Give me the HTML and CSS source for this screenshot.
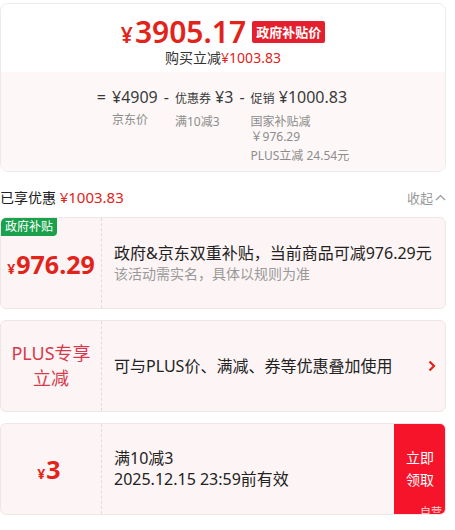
FILE: index.html
```html
<!DOCTYPE html>
<html lang="zh-CN">
<head>
    <meta charset="UTF-8">
    <meta name="viewport" content="width=device-width, initial-scale=1.0">
    <title>优惠明细</title>
    <link rel="stylesheet" href="styles.css">
</head>
<body>
    <div class="page">
        <section class="summary">
            <div class="summary-head">
                <div class="final-price"><span class="yen">¥</span>3905.17<span class="tag">政府补贴价</span></div>
                <div class="cut">购买立减<span class="red">¥1003.83</span></div>
            </div>
            <div class="formula">
                <span class="op">=</span>
                <div class="term">
                    <div class="amount">¥4909</div>
                    <div class="note">京东价</div>
                </div>
                <span class="op">-</span>
                <div class="term">
                    <div class="amount"><small>优惠券</small> ¥3</div>
                    <div class="note">满10减3</div>
                </div>
                <span class="op">-</span>
                <div class="term">
                    <div class="amount"><small>促销</small> ¥1000.83</div>
                    <div class="note">国家补贴减<br>￥976.29</div>
                    <div class="note plus">PLUS立减 24.54元</div>
                </div>
            </div>
        </section>

        <div class="saved">
            <div>已享优惠 <span class="red">¥1003.83</span></div>
            <div class="fold">收起 <svg width="11" height="7" viewBox="0 0 11 7"><path d="M1 6l4.5-4.5L10 6" fill="none" stroke="#999" stroke-width="1.2"/></svg></div>
        </div>

        <div class="card">
            <span class="badge">政府补贴</span>
            <div class="card-left">
                <div class="big-price"><span class="yen">¥</span>976.29</div>
            </div>
            <div class="card-body">
                <div class="title">政府&amp;京东双重补贴，当前商品可减976.29元</div>
                <div class="desc">该活动需实名，具体以规则为准</div>
            </div>
        </div>

        <div class="card">
            <div class="card-left">
                <div class="plus-label">PLUS专享<br>立减</div>
            </div>
            <div class="card-body">
                <div class="title">可与PLUS价、满减、券等优惠叠加使用</div>
            </div>
            <svg class="arrow" width="8" height="12" viewBox="0 0 8 12"><path d="M1.5 1.5L6 6l-4.5 4.5" fill="none" stroke="#e2231a" stroke-width="2.2"/></svg>
        </div>

        <div class="card">
            <div class="card-left">
                <div class="big-price small"><span class="yen">¥</span>3</div>
            </div>
            <div class="card-body">
                <div class="title">满10减3</div>
                <div class="title">2025.12.15 23:59前有效</div>
            </div>
            <div class="get-btn">
                <span>立即<br>领取</span>
                <span class="self">自营</span>
            </div>
        </div>
    </div>
</body>
</html>
```

FILE: styles.css
```css
body {
    margin: 0;
    padding: 0;
    background-color: #fff;
    color: #333;
    font-family: "Noto Sans", "Noto Sans CJK SC", sans-serif;
}
.page {
    width: 446px;
    padding-top: 3px;
}
.red {
    color: #e2231a;
}
.summary {
    border: 1px solid #ebebeb;
    border-radius: 8px;
    overflow: hidden;
}
.summary-head {
    padding: 10px 0 4px;
    text-align: center;
    background-color: #fff;
}
.final-price {
    display: flex;
    justify-content: center;
    align-items: center;
    height: 36px;
    font-size: 30px;
    line-height: 36px;
    font-weight: 600;
    color: #e2231a;
}
.final-price .yen {
    font-size: 21px;
    line-height: 1;
    margin: 6px 2px 0 0;
}
.tag {
    margin-left: 6px;
    padding: 0 4px;
    background-color: #e4202e;
    color: #fff;
    font-size: 13px;
    line-height: 22px;
    font-weight: 700;
    border-radius: 2px;
}
.cut {
    margin-top: -2px;
    font-size: 14px;
    line-height: 20px;
}
.formula {
    display: flex;
    justify-content: center;
    align-items: flex-start;
    gap: 6px;
    padding: 14px 0 8px;
    background-color: #fdf8f7;
    color: #3a3a3a;
}
.op {
    font-size: 16px;
    line-height: 22px;
}
.amount {
    font-size: 16px;
    line-height: 22px;
    white-space: nowrap;
}
.amount small {
    font-size: 12px;
}
.note {
    margin-top: 4px;
    font-size: 12px;
    line-height: 15px;
    color: #8c8c8c;
}
.saved {
    display: flex;
    justify-content: space-between;
    align-items: center;
    margin: 13px 0 7px;
    font-size: 14px;
    line-height: 24px;
    color: #222;
}
.saved .red {
    font-size: 15px;
}
.fold {
    color: #999;
    font-size: 13px;
    display: flex;
    align-items: center;
    gap: 2px;
}
.card {
    position: relative;
    display: flex;
    align-items: stretch;
    height: 92px;
    box-sizing: border-box;
    margin-bottom: 11px;
    background-color: #fdf5f5;
    border: 1px solid #efe6e6;
    border-radius: 6px;
    overflow: hidden;
}
.card:last-child {
    margin-top: 2px;
}
.badge {
    position: absolute;
    top: 0;
    left: 0;
    padding: 0 4px;
    background-color: #1ba14c;
    color: #fff;
    font-size: 12px;
    line-height: 18px;
    border-radius: 0 0 4px 0;
}
.card-left {
    flex: 0 0 100px;
    display: flex;
    align-items: center;
    justify-content: center;
    border-right: 1px dashed #ddd;
}
.big-price {
    font-size: 25px;
    font-weight: 700;
    color: #e2231a;
    margin-top: 2px;
}
.big-price .yen {
    font-size: 14px;
    margin-right: 1px;
}
.big-price.small {
    margin: 0 0 0 -4px;
}
.plus-label {
    text-align: center;
    font-size: 18px;
    line-height: 25px;
    color: #d53b4b;
}
.card-body {
    flex: 1;
    display: flex;
    flex-direction: column;
    justify-content: center;
    padding-left: 12px;
}
.title {
    font-size: 16px;
    line-height: 21px;
    color: #222;
}
.desc {
    font-size: 14px;
    line-height: 20px;
    color: #999;
}
.arrow {
    align-self: center;
    margin-right: 9px;
}
.get-btn {
    position: relative;
    flex: 0 0 52px;
    display: flex;
    align-items: center;
    justify-content: center;
    margin: -1px -1px -1px 0;
    background-color: #f5142a;
    color: #fff;
    font-size: 14px;
    line-height: 22px;
    text-align: center;
    border-radius: 0 6px 6px 0;
}
.self {
    position: absolute;
    right: 4px;
    bottom: -8px;
    font-size: 11px;
    color: #ffd6d6;
}
```
